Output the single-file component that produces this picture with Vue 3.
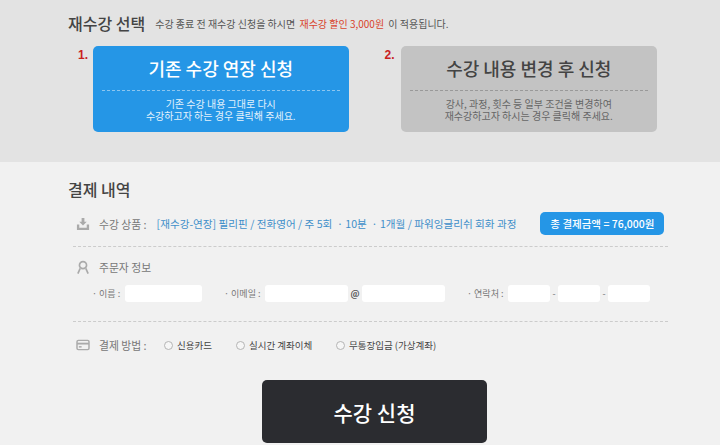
<template>
  <div class="page">
    <section class="select">
      <div class="head">
        <h2 class="title">재수강 선택</h2>
        <p class="notice">수강 종료 전 재수강 신청을 하시면 <em>재수강 할인 3,000원</em> 이 적용됩니다.</p>
      </div>
      <div class="choices">
        <div v-for="item in choices" :key="item.no" class="choice">
          <span class="no">{{ item.no }}.</span>
          <div class="card" :class="item.cls">
            <div class="card-title">{{ item.title }}</div>
            <div class="card-desc">{{ item.line1 }}<br />{{ item.line2 }}</div>
          </div>
        </div>
      </div>
    </section>

    <section class="pay">
      <h2 class="pay-title">결제 내역</h2>

      <div class="row product">
        <svg class="icon" width="14" height="14" viewBox="0 0 15 15" fill="#aaa">
          <path d="M6 1h3v4h2.500L7.500 9 3.500 5H6z" />
          <path d="M1 8h2.500v3.500h8V8H14v6H1z" />
        </svg>
        <span class="label">수강 상품 :</span>
        <span class="product-name">[재수강-연장] 필리핀 / 전화영어 / 주 5회 &nbsp;· 10분 &nbsp;· 1개월 / 파워잉글리쉬 회화 과정</span>
        <span class="total">총 결제금액 = 76,000원</span>
      </div>

      <div class="row buyer">
        <div class="buyer-head">
          <svg class="icon" width="14" height="15" viewBox="0 0 15 15" fill="none" stroke="#aaa" stroke-width="1.800">
            <circle cx="7.500" cy="5" r="3.800" />
            <path d="M4.500 8.500 2 14M10.500 8.500 13 14" />
          </svg>
          <span class="label">주문자 정보</span>
        </div>
        <div class="fields">
          <span class="field-label name-label">· 이름 :</span>
          <span class="input w77"></span>
          <span class="field-label mail-label">· 이메일 :</span>
          <span class="input w83"></span>
          <span class="at">@</span>
          <span class="input w83"></span>
          <span class="field-label tel-label">· 연락처 :</span>
          <span class="input w42"></span>
          <span class="dash">-</span>
          <span class="input w42"></span>
          <span class="dash">-</span>
          <span class="input w42"></span>
        </div>
      </div>

      <div class="row method">
        <svg class="icon" width="14" height="12" viewBox="0 0 15 13" fill="none" stroke="#aaa" stroke-width="1.600">
          <rect x="1" y="1.500" width="13" height="10" rx="1.500" />
          <path d="M1 5h13" stroke-width="2" />
          <path d="M3 8.500h3" />
        </svg>
        <span class="label">결제 방법 :</span>
        <label v-for="m in methods" :key="m.text" class="radio" :style="{ width: m.width + 'px' }">
          <span class="dot"></span>{{ m.text }}
        </label>
      </div>

      <button class="submit">수강 신청</button>
    </section>
  </div>
</template>

<script setup>
const choices = [
  {
    no: 1,
    cls: 'blue',
    title: '기존 수강 연장 신청',
    line1: '기존 수강 내용 그대로 다시',
    line2: '수강하고자 하는 경우 클릭해 주세요.'
  },
  {
    no: 2,
    cls: 'gray',
    title: '수강 내용 변경 후 신청',
    line1: '강사, 과정, 횟수 등 일부 조건을 변경하여',
    line2: '재수강하고자 하시는 경우 클릭해 주세요.'
  }
]

const methods = [
  { text: '신용카드', width: 72 },
  { text: '실시간 계좌이체', width: 100 },
  { text: '무통장입금 (가상계좌)', width: 130 }
]
</script>

<style>
html, body {
  margin: 0;
  background: #f1f1f1;
  overflow: hidden;
}
</style>

<style scoped>
.page {
  width: 720px;
  height: 445px;
  overflow: hidden;
  font-family: "Noto Sans CJK KR", "Liberation Sans", sans-serif;
  color: #444;
}

/* top area */
.select {
  height: 162px;
  box-sizing: border-box;
  padding: 12px 0 0 68px;
  background: #e3e3e3;
}

.head {
  display: flex;
  align-items: center;
  height: 22px;
}

.title {
  margin: 0;
  font-size: 16px;
  line-height: 22px;
  font-weight: 500;
  color: #444;
}

.notice {
  margin: 0 0 0 10px;
  font-size: 10px;
  color: #555;
  white-space: nowrap;
}

.notice em {
  font-style: normal;
  color: #d9432c;
  margin: 0 2px;
}

.choices {
  display: flex;
  margin-top: 12px;
}

.choice {
  display: flex;
}

.choice + .choice {
  margin-left: 35.500px;
}

.no {
  width: 24.500px;
  margin-top: 1px;
  font-size: 12px;
  font-weight: 700;
  line-height: 17px;
  color: #c9211e;
  font-family: "Liberation Sans", sans-serif;
  text-indent: 10px;
}

.choice + .choice .no {
  text-indent: 0;
  width: 16px;
}

.card {
  width: 256.500px;
  height: 86px;
  box-sizing: border-box;
  padding: 0 9px;
  border-radius: 5px;
  text-align: center;
}

.card-title {
  height: 44px;
  line-height: 44px;
  font-size: 18px;
  font-weight: 500;
  border-bottom: 1px dashed;
}

.card-desc {
  margin-top: 7px;
  font-size: 10px;
  line-height: 12px;
}

.blue {
  background: #2596e6;
  color: #fff;
}

.blue .card-title {
  border-color: #8cc6ef;
}

.blue .card-desc {
  color: #e4f2fc;
}

.gray {
  background: #c3c3c3;
  color: #444;
}

.gray .card-title {
  border-color: #999;
}

.gray .card-desc {
  color: #666;
}

/* payment area */
.pay {
  padding: 0 0 0 68px;
  background: #f1f1f1;
}

.pay-title {
  margin: 0;
  padding-top: 16px;
  font-size: 16px;
  line-height: 22px;
  font-weight: 500;
  color: #444;
}

.row {
  width: 595px;
  margin-left: 5px;
  box-sizing: border-box;
}

.icon {
  flex: none;
  margin-left: 3px;
}

.label {
  margin-left: 9px;
  font-size: 10.800px;
  color: #777;
  white-space: nowrap;
}

.product {
  display: flex;
  align-items: center;
  height: 46px;
  margin-top: 1px;
  border-bottom: 1px dashed #ccc;
}

.product-name {
  margin-left: 10px;
  font-size: 10.600px;
  color: #3f8fc9;
  white-space: nowrap;
}

.total {
  margin-left: 24px;
  flex: none;
  width: 124px;
  height: 23px;
  line-height: 23px;
  border-radius: 5px;
  background: #2596e6;
  color: #fff;
  font-size: 10.500px;
  font-weight: 500;
  text-align: center;
  white-space: nowrap;
}

.buyer {
  height: 75px;
  border-bottom: 1px dashed #ccc;
}

.buyer-head {
  display: flex;
  align-items: center;
  padding-top: 12px;
}

.fields {
  display: flex;
  align-items: center;
  margin-top: 10px;
  font-size: 9px;
  color: #777;
}

.field-label {
  white-space: nowrap;
}

.name-label {
  margin-left: 19px;
  width: 33px;
}

.mail-label {
  margin-left: 22px;
  width: 41px;
}

.tel-label {
  margin-left: 22px;
  width: 41px;
}

.input {
  height: 17px;
  border-radius: 3px;
  background: #fff;
}

.w77 { width: 77px; }
.w83 { width: 83px; }
.w42 { width: 42px; }

.at {
  width: 14px;
  text-align: center;
  color: #555;
  font-weight: 700;
}

.dash {
  width: 8px;
  text-align: center;
}

.method {
  display: flex;
  align-items: center;
  height: 46px;
}

.method .label {
  width: 55px;
  margin-right: 10px;
}

.radio {
  display: flex;
  align-items: center;
  flex: none;
  font-size: 9.500px;
  color: #444;
  white-space: nowrap;
}

.dot {
  width: 7px;
  height: 7px;
  margin-right: 4px;
  border: 1.500px solid #b5b5b5;
  border-radius: 50%;
  background: #f6f6f6;
}

.submit {
  display: block;
  width: 225px;
  height: 63px;
  margin: 12px 0 0 194px;
  padding: 0;
  border: 0;
  border-radius: 5px;
  background: #2b2c30;
  color: #fff;
  font-family: inherit;
  font-size: 21px;
  font-weight: 500;
}
</style>
